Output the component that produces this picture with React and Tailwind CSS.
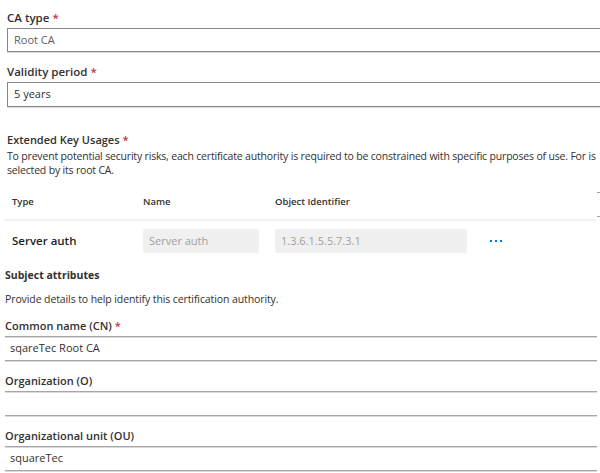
import React from "react";

const F = { fontFamily: '"Open Sans", "Noto Sans", sans-serif' };

function Req() {
  return <span className="text-[#c4314b] ml-[3px]">*</span>;
}

function LineField({ label, req, value }) {
  return (
    <div className="flex flex-col">
      <div className="text-[11px] font-semibold text-[#323130] h-[20px] leading-[20px] pl-[5px]">
        {label}
        {req && <Req />}
      </div>
      <div className="ml-[5px] mr-[3px] h-[25px] border-t border-b border-[#a6a6a6] shadow-[0_1px_0_#dadada,inset_0_1px_0_#dadada] flex items-center pl-[5px] text-[11px] text-[#323130]">
        {value}
      </div>
    </div>
  );
}

export default function App() {
  return (
    <div className="w-[600px] h-[473px] bg-white overflow-hidden text-[#323130]" style={F}>
      <div className="pt-[8px]">
        <div className="text-[11.5px] font-semibold h-[20px] leading-[20px] pl-[7px]">
          CA type<Req />
        </div>
        <div className="ml-[7px] h-[24px] border border-r-0 border-[#8a8886] shadow-[0_1px_0_#dedede] flex items-center pl-[6px] text-[11px] text-[#605e5c]">
          Root CA
        </div>
        <div className="text-[11.5px] font-semibold h-[20px] leading-[20px] pl-[7px] mt-[10px]">
          Validity period<Req />
        </div>
        <div className="ml-[7px] h-[25px] border border-r-0 border-[#8a8886] shadow-[0_1px_0_#dedede] flex items-center pl-[6px] text-[11px] text-[#323130]">
          5 years
        </div>

        <div className="text-[11px] font-semibold h-[18px] leading-[18px] pl-[7px] mt-[24px]">
          Extended Key Usages<Req />
        </div>
        <div className="pl-[7px] text-[10.5px] leading-[14px] whitespace-nowrap tracking-[-0.18px]">
          To prevent potential security risks, each certificate authority is required to be constrained with specific purposes of use. For is
        </div>
        <div className="pl-[7px] text-[10.5px] leading-[14px] tracking-[-0.18px]">selected by its root CA.</div>

        <div className="relative mt-[8px]">
          <div className="flex items-center h-[36px] text-[9.5px] font-semibold border-b-2 border-[#f3f2f1] ml-[4px] mr-[4px]">
            <div className="w-[139px] pl-[8px]">Type</div>
            <div className="w-[132px]">Name</div>
            <div>Object Identifier</div>
          </div>
          <div className="absolute right-0 top-[7px] w-[3px] h-[1px] bg-[#a0a0a0]" />
          <div className="absolute right-0 top-[31px] w-[3px] h-[1px] bg-[#a0a0a0]" />
          <div className="flex items-center h-[40px]">
            <div className="w-[143px] pl-[12px] text-[11.5px] font-semibold text-[#201f1e]">Server auth</div>
            <div className="w-[116px] h-[24px] bg-[#f0f0f0] rounded-[2px] flex items-center pl-[6px] text-[11px] text-[#a19f9d]">
              Server auth
            </div>
            <div className="w-[16px]" />
            <div className="w-[192px] h-[24px] bg-[#f0f0f0] rounded-[2px] flex items-center pl-[6px] text-[11px] text-[#a19f9d]">
              1.3.6.1.5.5.7.3.1
            </div>
            <div className="ml-[23px] flex gap-[3px] items-center">
              <span className="w-[2px] h-[2px] bg-[#0078d4]" />
              <span className="w-[2px] h-[2px] bg-[#0078d4]" />
              <span className="w-[2px] h-[2px] bg-[#0078d4]" />
            </div>
          </div>
        </div>

        <div className="text-[10.5px] font-bold h-[18px] leading-[18px] pl-[5px] mt-[5px]">
          Subject attributes
        </div>
        <div className="pl-[5px] text-[10.5px] leading-[14px] mt-[8px] tracking-[-0.1px]">
          Provide details to help identify this certification authority.
        </div>
        <div className="mt-[10px] flex flex-col gap-[10px]">
          <LineField label="Common name (CN)" req value="sqareTec Root CA" />
          <LineField label="Organization (O)" value="" />
          <LineField label="Organizational unit (OU)" value="squareTec" />
        </div>
      </div>
    </div>
  );
}
